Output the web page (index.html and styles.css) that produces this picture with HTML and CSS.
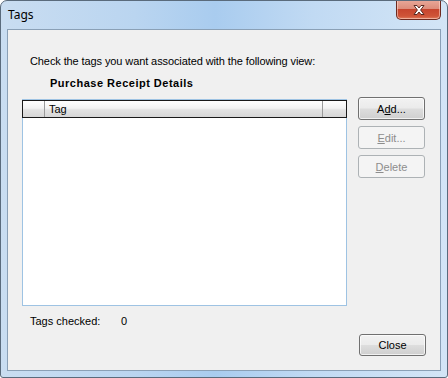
FILE: index.html
```html
<!DOCTYPE html>
<html>
<head>
<meta charset="utf-8">
<link rel="stylesheet" href="styles.css">
</head>
<body>
<div class="window">
  <div class="titlebar">
    <span class="title">Tags</span>
    <div class="close-btn">
      <svg width="16" height="12" viewBox="0 0 16 12">
        <path d="M3 1.5 L6 1.5 L8 4 L10 1.5 L13 1.5 L9.6 6 L13 10.5 L10 10.5 L8 8 L6 10.5 L3 10.5 L6.4 6 Z" fill="#ffffff" stroke="#5a2a22" stroke-width="1" stroke-linejoin="round"/>
      </svg>
    </div>
  </div>
  <div class="client">
    <p class="intro">Check the tags you want associated with the following view:</p>
    <p class="view-name">Purchase Receipt Details</p>
    <div class="main">
      <div class="listview">
        <div class="lv-header">
          <div class="col col-check"></div>
          <div class="col col-tag">Tag</div>
          <div class="col col-rest"></div>
        </div>
      </div>
      <div class="side-buttons">
        <button class="btn">A<u>d</u>d...</button>
        <button class="btn" disabled><u>E</u>dit...</button>
        <button class="btn" disabled><u>D</u>elete</button>
      </div>
    </div>
    <div class="status">
      <span class="status-label">Tags checked:</span>
      <span class="status-value">0</span>
    </div>
    <div class="footer">
      <button class="btn">Close</button>
    </div>
  </div>
</div>
</body>
</html>
```

FILE: styles.css
```css
html, body {
  margin: 0;
  padding: 0;
  background: #ffffff;
}

p {
  margin: 0;
}

.window {
  box-sizing: border-box;
  width: 448px;
  height: 378px;
  border: 1px solid #5a6b7c;
  border-radius: 7px 7px 3px 3px;
  background: linear-gradient(90deg, #c9ddf1 0%, #bad5f0 30%, #a9ccef 48%, #c1daf3 70%, #d3e5f6 100%);
  display: flex;
  flex-direction: column;
  overflow: hidden;
}

.titlebar {
  height: 28px;
  display: flex;
  justify-content: space-between;
  align-items: flex-start;
  flex: none;
}

.title {
  font-family: "Noto Sans", "DejaVu Sans", sans-serif;
  font-size: 12px;
  color: #000000;
  margin: 6px 0 0 7px;
  line-height: 16px;
}

.close-btn {
  box-sizing: border-box;
  width: 45px;
  height: 20px;
  margin: -1px 6px 0 0;
  border: 1px solid #6d2a20;
  border-top: none;
  border-radius: 0 0 5px 5px;
  background: linear-gradient(180deg, #e9a99a 0%, #dd8d7b 45%, #c7452e 50%, #cf5438 85%, #e07c5e 100%);
  box-shadow: inset 0 0 0 1px rgba(255, 220, 210, 0.55);
  display: flex;
  align-items: center;
  justify-content: center;
}

.client {
  flex: 1;
  margin: 0 6px 6px 6px;
  border: 1px solid #8aa0b6;
  background: #f0f0f0;
  display: flex;
  flex-direction: column;
  font-family: "Liberation Sans", Arial, sans-serif;
  font-size: 11px;
  color: #000000;
}

.intro {
  margin: 25px 0 0 22px;
  line-height: 13px;
  letter-spacing: -0.1px;
}

.view-name {
  margin: 9px 0 0 42px;
  font-weight: bold;
  line-height: 13px;
  letter-spacing: 0.5px;
}

.main {
  display: flex;
  margin: 7px 0 0 14px;
  gap: 11px;
}

.listview {
  box-sizing: border-box;
  width: 325px;
  height: 207px;
  border: 1px solid #9ec3e3;
  background: #ffffff;
  margin-top: 2px;
}

.lv-header {
  display: flex;
  box-sizing: border-box;
  height: 18px;
  margin: 0 -1px;
  border: 1px solid #1a1a1a;
  background: linear-gradient(180deg, #ffffff 0%, #f3f3f3 45%, #e3e3e3 55%, #d6d6d6 100%);
}

.col {
  line-height: 16px;
  box-sizing: border-box;
}

.col-check {
  width: 22px;
  border-right: 1px solid #9a9a9a;
}

.col-tag {
  width: 278px;
  padding-left: 4px;
  border-right: 1px solid #9a9a9a;
}

.col-rest {
  flex: 1;
}

.side-buttons {
  display: flex;
  flex-direction: column;
  gap: 6px;
}

.btn {
  box-sizing: border-box;
  width: 67px;
  height: 23px;
  padding: 0;
  border: 1px solid #707070;
  border-radius: 3px;
  background: linear-gradient(180deg, #f2f2f2 0%, #ebebeb 48%, #dddddd 52%, #cfcfcf 100%);
  box-shadow: inset 0 0 0 1px rgba(255, 255, 255, 0.7);
  font-family: "Liberation Sans", Arial, sans-serif;
  font-size: 11px;
  color: #000000;
}

.btn:disabled {
  border-color: #adb2b5;
  background: #f4f4f4;
  box-shadow: none;
  color: #8d8d8d;
}

.status {
  display: flex;
  margin: 9px 0 0 22px;
  line-height: 13px;
}

.status-label {
  width: 91px;
}

.footer {
  display: flex;
  justify-content: flex-end;
  margin: 6px 14px 0 0;
}

.footer .btn {
  height: 22px;
}
```
